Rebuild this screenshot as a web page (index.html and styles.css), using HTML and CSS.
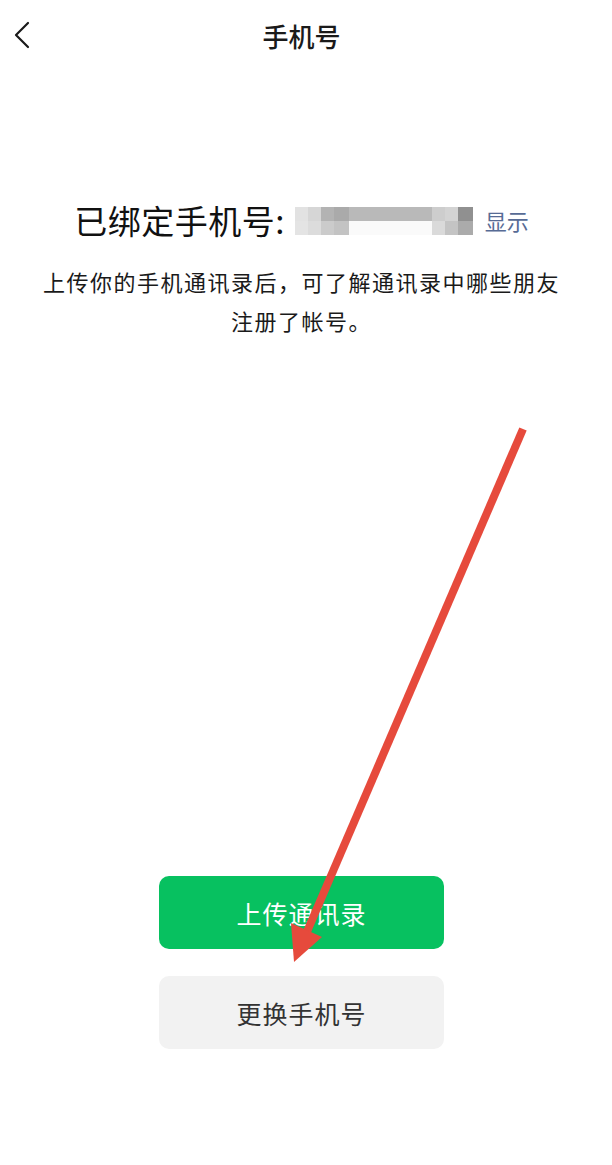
FILE: index.html
```html
<!DOCTYPE html>
<html lang="zh-CN">
<head>
<meta charset="utf-8">
<title>手机号</title>
<link rel="stylesheet" href="styles.css">
</head>
<body>
<div class="page">
  <header class="nav">
    <span class="back">
      <svg width="16" height="28" viewBox="0 0 16 28"><polyline points="14,2 2,14 14,26" fill="none" stroke="#1a1a1a" stroke-width="2.2" stroke-linecap="round" stroke-linejoin="round"/></svg>
    </span>
    <h1 class="nav-title">手机号</h1>
  </header>

  <main class="content">
    <div class="bound">
      <span class="bound-label">已绑定手机号:</span>
      <span class="mosaic">
        <span class="m c1"></span><span class="m c2"></span><span class="m c3"></span><span class="m c4"></span><span class="m mid1"></span><span class="m c5"></span><span class="m c6"></span><span class="m c7"></span>
        <span class="m d1"></span><span class="m d2"></span><span class="m d3"></span><span class="m d4"></span><span class="m mid2"></span><span class="m d5"></span><span class="m d6"></span><span class="m d7"></span>
      </span>
      <a class="show">显示</a>
    </div>
    <p class="desc">上传你的手机通讯录后，可了解通讯录中哪些朋友<br>注册了帐号。</p>

    <div class="actions">
      <button class="btn btn-primary">上传通讯录</button>
      <button class="btn btn-secondary">更换手机号</button>
    </div>
  </main>

  <svg class="annot" width="612" height="1165" viewBox="0 0 612 1165">
    <line x1="523" y1="429" x2="306" y2="934" stroke="#e64a3c" stroke-width="8" stroke-linecap="butt"/>
    <polygon points="294,962 291,923 322,937" fill="#e64a3c"/>
  </svg>
</div>
</body>
</html>
```

FILE: styles.css
```css
* { box-sizing: border-box; }
html, body { margin: 0; padding: 0; background: #fff; }
body {
  font-family: "Noto Sans CJK SC", "Noto Sans", sans-serif;
  color: #1a1a1a;
}
.page {
  position: relative;
  width: 612px;
  height: 1165px;
  padding-right: 9px;
  display: flex;
  flex-direction: column;
  overflow: hidden;
}
.nav {
  height: 72px;
  display: flex;
  align-items: center;
  justify-content: center;
  position: relative;
  flex-shrink: 0;
}
.back {
  position: absolute;
  left: 14px;
  top: 21px;
  display: flex;
}
.nav-title {
  margin: 0;
  font-size: 26px;
  font-weight: 500;
  color: #1a1a1a;
  line-height: 1;
}
.content {
  flex: 1;
  display: flex;
  flex-direction: column;
  align-items: center;
  padding-top: 128px;
  padding-bottom: 116px;
}
.bound {
  display: flex;
  align-items: center;
  height: 40px;
}
.bound-label {
  font-size: 33px;
  color: #111;
  line-height: 40px;
  letter-spacing: 0.5px;
}
.mosaic {
  margin-left: 10px;
  width: 178px;
  height: 33px;
  display: grid;
  grid-template-columns: 13px 13px 13px 15px 83px 13px 13px 15px;
  grid-template-rows: 14px 14px 5px;
  margin-top: 6px;
}
.m { display: block; }
.c1 { background: #e2e2e2; }
.c2 { background: #d6d6d6; }
.c3 { background: #b3b3b3; }
.c4 { background: #aaaaaa; }
.mid1 { background: #b9b9b9; }
.c5 { background: #cdcdcd; }
.c6 { background: #d3d3d3; }
.c7 { background: #909090; }
.d1 { background: #e4e4e4; }
.d2 { background: #dcdcdc; }
.d3 { background: #cbcbcb; }
.d4 { background: #c3c3c3; }
.mid2 { background: #fafafa; }
.d5 { background: #dadada; }
.d6 { background: #c4c4c4; }
.d7 { background: #ababab; }
.show {
  margin-left: 12px;
  font-size: 22px;
  color: #576b95;
  line-height: 40px;
}
.desc {
  margin: 22px 0 0;
  font-size: 22px;
  line-height: 39px;
  text-align: center;
  color: #1a1a1a;
  letter-spacing: 1.5px;
}
.actions {
  margin-top: auto;
  display: flex;
  flex-direction: column;
  gap: 27px;
}
.btn {
  width: 285px;
  height: 73px;
  border: none;
  border-radius: 10px;
  font-family: "Noto Sans CJK SC", "Noto Sans", sans-serif;
  font-size: 25px;
  letter-spacing: 1px;
}
.btn-primary {
  background: #07c160;
  color: #fff;
}
.btn-secondary {
  background: #f2f2f2;
  color: #333;
}
.annot {
  position: absolute;
  left: 0;
  top: 0;
  pointer-events: none;
}
```
